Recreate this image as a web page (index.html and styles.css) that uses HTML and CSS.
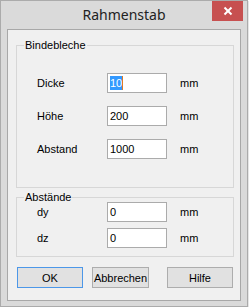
FILE: index.html
```html
<!DOCTYPE html>
<html lang="de">
<head>
    <meta charset="UTF-8">
    <title>Rahmenstab</title>
    <link rel="stylesheet" href="styles.css">
</head>
<body>
    <div class="window">
        <div class="titlebar">
            <div class="title">Rahmenstab</div>
            <div class="close">
                <svg width="10" height="10" viewBox="0 0 10 10">
                    <line x1="1.5" y1="1.5" x2="8.5" y2="8.5" stroke="#fff" stroke-width="2"></line>
                    <line x1="8.5" y1="1.5" x2="1.5" y2="8.5" stroke="#fff" stroke-width="2"></line>
                </svg>
            </div>
        </div>

        <div class="client">
            <div class="group group-bleche">
                <span class="legend">Bindebleche</span>
                <div class="row">
                    <span class="label">Dicke</span>
                    <div class="field"><span class="selected">10</span><span class="caret"></span></div>
                    <span class="unit">mm</span>
                </div>
                <div class="row">
                    <span class="label">Höhe</span>
                    <div class="field">200</div>
                    <span class="unit">mm</span>
                </div>
                <div class="row">
                    <span class="label">Abstand</span>
                    <div class="field">1000</div>
                    <span class="unit">mm</span>
                </div>
            </div>

            <div class="group group-abstaende">
                <span class="legend">Abstände</span>
                <div class="row">
                    <span class="label">dy</span>
                    <div class="field">0</div>
                    <span class="unit">mm</span>
                </div>
                <div class="row">
                    <span class="label">dz</span>
                    <div class="field">0</div>
                    <span class="unit">mm</span>
                </div>
            </div>

            <div class="buttons">
                <button class="btn btn-default">OK</button>
                <button class="btn btn-cancel">Abbrechen</button>
                <button class="btn btn-help">Hilfe</button>
            </div>
        </div>
    </div>
</body>
</html>
```

FILE: styles.css
```css
body {
    margin: 0;
    background-color: #fff;
    font-family: 'Liberation Sans', Arial, sans-serif;
    font-size: 11px;
    color: #000;
}

.window {
    width: 248px;
    height: 307px;
    box-sizing: border-box;
    border: 1px solid #ababab;
    background-color: #dadada;
    display: flex;
    flex-direction: column;
    box-shadow: 1px 1px 0 #e6e6e6;
}

.titlebar {
    height: 28px;
    display: grid;
    grid-template-columns: 1fr auto 1fr;
}

.title {
    grid-column: 2;
    font-family: 'Noto Sans', 'Open Sans', sans-serif;
    font-size: 14px;
    line-height: 28px;
    color: #222;
}

.close {
    grid-column: 3;
    justify-self: end;
    width: 31px;
    height: 20px;
    margin-right: 4px;
    background-color: #c75050;
    display: flex;
    align-items: center;
    justify-content: center;
}

.client {
    flex: 1;
    margin: 0 6px 5px 6px;
    border: 1px solid #a8a8a8;
    background-color: #f0f0f0;
    padding: 15px 6px 0 8px;
}

.group {
    position: relative;
    width: 218px;
    box-sizing: border-box;
    border: 1px solid #d7d7d7;
    padding-left: 20px;
    display: flex;
    flex-direction: column;
}

.group-bleche {
    padding-top: 27px;
    padding-bottom: 28px;
    gap: 13px;
}

.group-abstaende {
    margin-top: 9px;
    padding-top: 4px;
    padding-bottom: 8px;
    gap: 6px;
}

.legend {
    position: absolute;
    top: -8px;
    left: 7px;
    padding: 0 1px;
    background-color: #f0f0f0;
    line-height: 14px;
}

.row {
    display: flex;
    align-items: center;
    height: 20px;
}

.label {
    width: 70px;
}

.field {
    width: 60px;
    height: 20px;
    box-sizing: border-box;
    border: 1px solid #ababab;
    background-color: #fff;
    padding-left: 2px;
    line-height: 18px;
    display: flex;
    align-items: center;
}

.selected {
    background-color: #3399ff;
    color: #fff;
    line-height: 14px;
}

.caret {
    width: 1px;
    height: 14px;
    background-color: #e07b24;
}

.unit {
    margin-left: 13px;
}

.buttons {
    display: flex;
    margin-top: 10px;
    margin-left: 1px;
}

.btn {
    height: 21px;
    box-sizing: border-box;
    border: 1px solid #adadad;
    background-color: #e1e1e1;
    font-family: 'Liberation Sans', Arial, sans-serif;
    font-size: 11px;
    color: #000;
    padding: 0;
}

.btn-default {
    width: 66px;
    border-color: #4c97e8;
}

.btn-cancel {
    width: 57px;
    margin-left: 9px;
}

.btn-help {
    width: 66px;
    margin-left: 18px;
}
```
